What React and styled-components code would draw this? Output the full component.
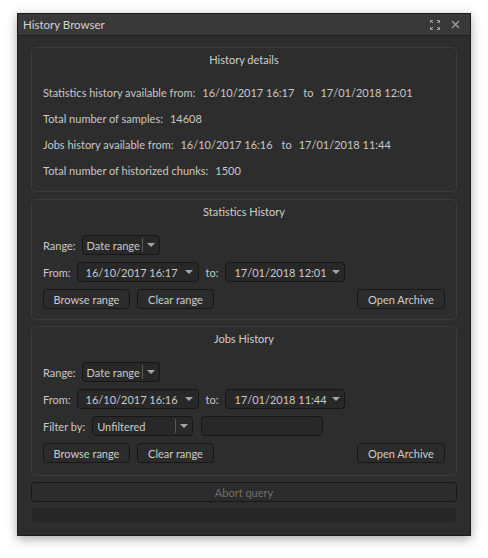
import React from "react"
import styled, { createGlobalStyle } from "styled-components"

const GlobalStyle = createGlobalStyle`
  html, body {
    margin: 0;
    padding: 0;
    background: #ffffff;
  }
  body {
    font-family: Lato, "Open Sans", sans-serif;
    font-size: 11px;
    color: #c8c8c8;
  }
`

const Page = styled.div`
  padding: 13px 0 0 17px;
  width: 488px;
  height: 558px;
  box-sizing: border-box;
`

const Window = styled.div`
  width: 454px;
  height: 523px;
  box-sizing: border-box;
  display: flex;
  flex-direction: column;
  background: #2d2d2d;
  border: 1px solid #1c1c1c;
  box-shadow: 0 3px 10px rgba(0, 0, 0, 0.35);
`

const TitleBar = styled.div`
  height: 21px;
  flex: none;
  display: flex;
  align-items: center;
  padding: 0 9px 0 5px;
  background: #393939;
  border-bottom: 1px solid #1f1f1f;
  font-size: 11.5px;
  color: #d2d2d2;

  .title {
    flex: 1;
  }
`

const TitleButton = styled.span`
  display: flex;
  align-items: center;
  justify-content: center;
  width: 11px;
  height: 11px;
  margin-left: ${(p) => p.gap || 0}px;
  color: #a0a0a0;
`

const Body = styled.div`
  flex: 1;
  display: flex;
  flex-direction: column;
  padding: 11px 13px 0;
`

const Group = styled.div`
  display: flex;
  flex-direction: column;
  border: 1px solid #3b3b3b;
  border-radius: 5px;
  padding: 5px 11px ${(p) => p.bottom}px;
  margin-bottom: ${(p) => p.after}px;

  h3 {
    margin: 0;
    font-size: 11px;
    font-weight: normal;
    line-height: 14px;
    text-align: center;
    color: #cfcfcf;
  }
`

const DetailRows = styled.div`
  display: flex;
  flex-direction: column;
  margin-top: 12px;
`

const DetailRow = styled.div`
  display: flex;
  gap: 7px;
  height: 26px;
  align-items: center;
  white-space: nowrap;

  .to {
    margin-left: 2px;
  }
`

const FormRows = styled.div`
  display: flex;
  flex-direction: column;
  gap: 7px;
  margin-top: 16px;
`

const FormRow = styled.div`
  display: flex;
  align-items: center;
  height: 20px;
  white-space: nowrap;

  .spacer {
    flex: 1;
  }
`

const Label = styled.span`
  margin-right: ${(p) => p.gap}px;
  margin-left: ${(p) => p.lead || 0}px;
`

const Combo = styled.div`
  box-sizing: border-box;
  width: ${(p) => p.w}px;
  height: 20px;
  display: flex;
  align-items: center;
  background: #282828;
  border: 1px solid #161616;
  border-radius: 4px;
  padding-left: ${(p) => (p.split ? 4 : 8)}px;
  color: #cacaca;

  .value {
    flex: 1;
  }
`

const DropSegment = styled.span`
  display: flex;
  align-items: center;
  justify-content: center;
  align-self: stretch;
  width: ${(p) => (p.split ? 16 : 18)}px;
  margin: ${(p) => (p.split ? "2px 0" : "0")};
  border-left: ${(p) => (p.split ? "1px solid #5a5a5a" : "none")};
`

const Arrow = styled.span`
  width: 0;
  height: 0;
  border-left: 4px solid transparent;
  border-right: 4px solid transparent;
  border-top: 4px solid #a8a8a8;
`

const TextField = styled.div`
  box-sizing: border-box;
  width: 122px;
  height: 20px;
  margin-left: 8px;
  background: #282828;
  border: 1px solid #161616;
  border-radius: 4px;
`

const Button = styled.div`
  box-sizing: border-box;
  height: 20px;
  display: flex;
  align-items: center;
  justify-content: center;
  padding: 0 10px;
  width: ${(p) => (p.w ? `${p.w}px` : "auto")};
  margin-left: ${(p) => p.gap || 0}px;
  background: #2b2b2b;
  border: 1px solid #171717;
  border-radius: 4px;
  color: ${(p) => (p.disabled ? "#6f6f6f" : "#cccccc")};
`

const WideButton = styled(Button)`
  flex: none;
  width: 100%;
  height: 20px;
  margin-top: 6px;
`

const Progress = styled.div`
  height: 14px;
  margin: 6px 1px 0;
  background: #262626;
  border-radius: 2px;
`

function DropCombo({ w, value, split }) {
  return (
    <Combo w={w} split={split}>
      <span className="value">{value}</span>
      <DropSegment split={split}>
        <Arrow />
      </DropSegment>
    </Combo>
  )
}

function ExpandIcon() {
  return (
    <svg width="10" height="10" viewBox="0 0 10 10" fill="none" stroke="currentColor" strokeWidth="1">
      <path d="M0.5 3V0.5H3M7 0.5H9.5V3M9.5 7V9.5H7M3 9.5H0.5V7" />
      <path d="M1 1L3 3M9 1L7 3M9 9L7 7M1 9L3 7" />
    </svg>
  )
}

function CloseIcon() {
  return (
    <svg width="9" height="9" viewBox="0 0 9 9" fill="none" stroke="currentColor" strokeWidth="1.3">
      <path d="M1 1L8 8M8 1L1 8" />
    </svg>
  )
}

function RangeGroup({ title, from, to, filter, bottom, after }) {
  return (
    <Group bottom={bottom} after={after}>
      <h3>{title}</h3>
      <FormRows>
        <FormRow>
          <Label gap={6}>Range:</Label>
          <DropCombo w={78} value="Date range" split />
        </FormRow>
        <FormRow>
          <Label gap={6}>From:</Label>
          <DropCombo w={122} value={from} />
          <Label gap={7} lead={7}>
            to:
          </Label>
          <DropCombo w={120} value={to} />
        </FormRow>
        {filter && (
          <FormRow>
            <Label gap={7}>Filter by:</Label>
            <DropCombo w={101} value="Unfiltered" split />
            <TextField />
          </FormRow>
        )}
        <FormRow>
          <Button w={87}>Browse range</Button>
          <Button w={77} gap={7}>
            Clear range
          </Button>
          <span className="spacer" />
          <Button w={88}>Open Archive</Button>
        </FormRow>
      </FormRows>
    </Group>
  )
}

export default function App() {
  return (
    <Page>
      <GlobalStyle />
      <Window>
        <TitleBar>
          <span className="title">History Browser</span>
          <TitleButton>
            <ExpandIcon />
          </TitleButton>
          <TitleButton gap={10}>
            <CloseIcon />
          </TitleButton>
        </TitleBar>
        <Body>
          <Group bottom={8} after={7}>
            <h3>History details</h3>
            <DetailRows>
              <DetailRow>
                <span>Statistics history available from:</span>
                <span>16/10/2017 16:17</span>
                <span className="to">to</span>
                <span>17/01/2018 12:01</span>
              </DetailRow>
              <DetailRow>
                <span>Total number of samples:</span>
                <span>14608</span>
              </DetailRow>
              <DetailRow>
                <span>Jobs history available from:</span>
                <span>16/10/2017 16:16</span>
                <span className="to">to</span>
                <span>17/01/2018 11:44</span>
              </DetailRow>
              <DetailRow>
                <span>Total number of historized chunks:</span>
                <span>1500</span>
              </DetailRow>
            </DetailRows>
          </Group>
          <RangeGroup
            title="Statistics History"
            from="16/10/2017 16:17"
            to="17/01/2018 12:01"
            bottom={10}
            after={6}
          />
          <RangeGroup
            title="Jobs History"
            from="16/10/2017 16:16"
            to="17/01/2018 11:44"
            filter
            bottom={12}
            after={0}
          />
          <WideButton disabled>Abort query</WideButton>
          <Progress />
        </Body>
      </Window>
    </Page>
  )
}
